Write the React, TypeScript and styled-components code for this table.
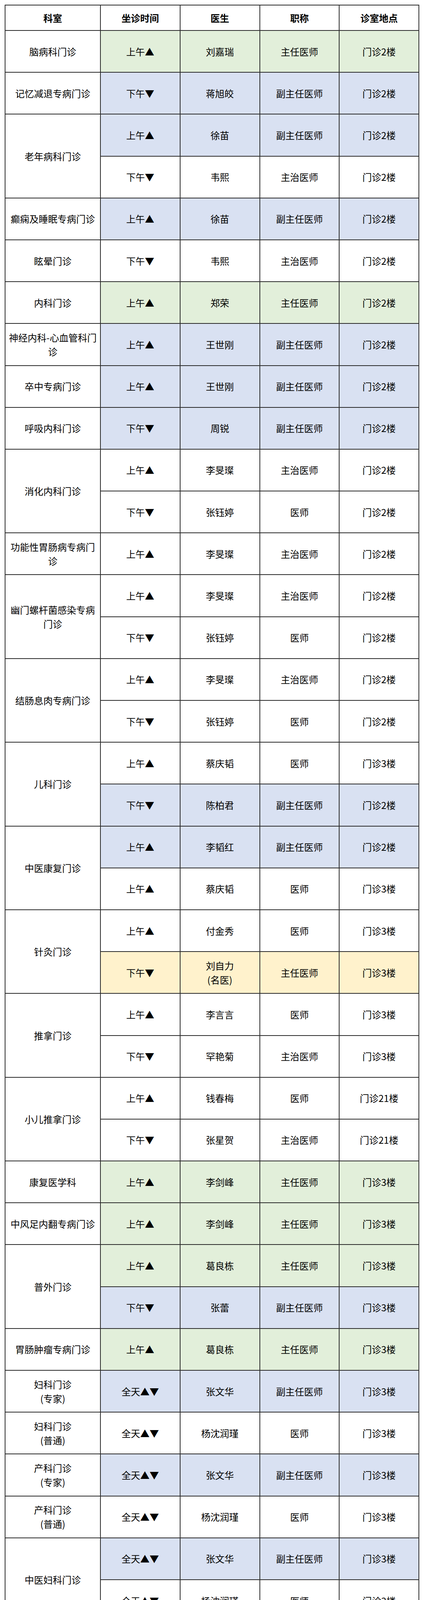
import React from 'react';
import styled, { createGlobalStyle } from 'styled-components';

type Tone = 'g' | 'b' | 'y' | 'w';

const toneColor: Record<Tone, string> = {
  g: '#e2efda',
  b: '#d9e1f2',
  y: '#fff2cc',
  w: '#ffffff',
};

interface Slot {
  time: React.ReactNode;
  doctor: string;
  title: string;
  place: string;
  tone?: Tone;
}

interface Dept {
  name: string;
  slots: Slot[];
}

const GlobalStyle = createGlobalStyle`
  html, body {
    margin: 0;
    padding: 0;
    background: #ffffff;
  }
  body {
    font-family: "Noto Sans CJK SC", "Noto Sans", sans-serif;
    color: #000;
  }
`;

const Page = styled.div`
  width: 1080px;
  padding: 12px 0 0 12px;
  box-sizing: border-box;
`;

const Table = styled.table`
  width: 1061px;
  border-collapse: collapse;
  table-layout: fixed;
`;

const DeptCol = styled.col`
  width: 244px;
`;

const HeadRow = styled.tr`
  height: 65px;
`;

const BodyRow = styled.tr`
  height: 107.2px;
`;

const HeadCell = styled.th`
  border: 2px solid #2b2b2b;
  background: #ffffff;
  font-size: 24px;
  font-weight: 700;
  line-height: 36px;
  text-align: center;
  vertical-align: middle;
  padding: 0 4px;
`;

const Cell = styled.td<{ $tone?: Tone }>`
  border: 2px solid #2b2b2b;
  background: ${(p) => toneColor[p.$tone ?? 'w']};
  font-size: 24px;
  line-height: 36px;
  text-align: center;
  vertical-align: middle;
  padding: 0 4px;
  white-space: pre-line;
  word-break: break-all;
`;

const DeptCell = styled(Cell)`
  background: #ffffff;
  padding: 0 5px;
`;

const BlankRow = styled.tr<{ $h: number }>`
  height: ${(p) => p.$h}px;
`;

const BlankCell = styled.td`
  border: 2px solid #e8e8e8;
  border-top: none;
  padding: 0;
`;

const SunSvg = styled.svg`
  width: 24px;
  height: 24px;
  vertical-align: -5px;
  margin-left: 1px;
`;

const sunRays = Array.from({ length: 32 }, (_, i) => {
  const a = (Math.PI * i) / 16;
  const r = i % 2 === 0 ? 15.4 : 11.6;
  return `${(16 + r * Math.sin(a)).toFixed(2)},${(16 - r * Math.cos(a)).toFixed(2)}`;
}).join(' ');

const SunIcon: React.FC = () => (
  <SunSvg viewBox="0 0 32 32">
    <polygon points={sunRays} fill="#f4a900" stroke="#7a4d00" strokeWidth="1" strokeLinejoin="round" />
    <circle cx="16" cy="16" r="9.6" fill="#ffd42a" stroke="#a66a00" strokeWidth="0.8" />
    <ellipse cx="12.8" cy="14.2" rx="1.3" ry="1.7" fill="#5a3600" />
    <ellipse cx="19.2" cy="14.2" rx="1.3" ry="1.7" fill="#5a3600" />
    <path d="M11.6 18.4 Q16 22.6 20.4 18.4" fill="none" stroke="#5a3600" strokeWidth="1.4" strokeLinecap="round" />
  </SunSvg>
);

const AM = '上午▲';
const PM = '下午▼';
const ALL = '全天▲▼';

const depts: Dept[] = [
  { name: '脑病科门诊', slots: [{ time: AM, doctor: '刘嘉瑞', title: '主任医师', place: '门诊2楼', tone: 'g' }] },
  { name: '记忆减退专病门诊', slots: [{ time: PM, doctor: '蒋旭皎', title: '副主任医师', place: '门诊2楼', tone: 'b' }] },
  {
    name: '老年病科门诊',
    slots: [
      { time: AM, doctor: '徐苗', title: '副主任医师', place: '门诊2楼', tone: 'b' },
      { time: PM, doctor: '韦熙', title: '主治医师', place: '门诊2楼' },
    ],
  },
  { name: '癫痫及睡眠专病门诊', slots: [{ time: AM, doctor: '徐苗', title: '副主任医师', place: '门诊2楼', tone: 'b' }] },
  { name: '眩晕门诊', slots: [{ time: PM, doctor: '韦熙', title: '主治医师', place: '门诊2楼' }] },
  { name: '内科门诊', slots: [{ time: AM, doctor: '郑荣', title: '主任医师', place: '门诊2楼', tone: 'g' }] },
  { name: '神经内科-心血管科门诊', slots: [{ time: AM, doctor: '王世刚', title: '副主任医师', place: '门诊2楼', tone: 'b' }] },
  { name: '卒中专病门诊', slots: [{ time: AM, doctor: '王世刚', title: '副主任医师', place: '门诊2楼', tone: 'b' }] },
  { name: '呼吸内科门诊', slots: [{ time: PM, doctor: '周锐', title: '副主任医师', place: '门诊2楼', tone: 'b' }] },
  {
    name: '消化内科门诊',
    slots: [
      { time: AM, doctor: '李旻璨', title: '主治医师', place: '门诊2楼' },
      { time: PM, doctor: '张钰婷', title: '医师', place: '门诊2楼' },
    ],
  },
  { name: '功能性胃肠病专病门诊', slots: [{ time: AM, doctor: '李旻璨', title: '主治医师', place: '门诊2楼' }] },
  {
    name: '幽门螺杆菌感染专病门诊',
    slots: [
      { time: AM, doctor: '李旻璨', title: '主治医师', place: '门诊2楼' },
      { time: PM, doctor: '张钰婷', title: '医师', place: '门诊2楼' },
    ],
  },
  {
    name: '结肠息肉专病门诊',
    slots: [
      { time: AM, doctor: '李旻璨', title: '主治医师', place: '门诊2楼' },
      { time: PM, doctor: '张钰婷', title: '医师', place: '门诊2楼' },
    ],
  },
  {
    name: '儿科门诊',
    slots: [
      { time: AM, doctor: '蔡庆韬', title: '医师', place: '门诊3楼' },
      { time: PM, doctor: '陈柏君', title: '副主任医师', place: '门诊2楼', tone: 'b' },
    ],
  },
  {
    name: '中医康复门诊',
    slots: [
      { time: AM, doctor: '李韬红', title: '副主任医师', place: '门诊2楼', tone: 'b' },
      { time: AM, doctor: '蔡庆韬', title: '医师', place: '门诊3楼' },
    ],
  },
  {
    name: '针灸门诊',
    slots: [
      { time: AM, doctor: '付金秀', title: '医师', place: '门诊3楼' },
      { time: PM, doctor: '刘自力\n(名医)', title: '主任医师', place: '门诊3楼', tone: 'y' },
    ],
  },
  {
    name: '推拿门诊',
    slots: [
      { time: AM, doctor: '李言言', title: '医师', place: '门诊3楼' },
      { time: PM, doctor: '罕艳菊', title: '主治医师', place: '门诊3楼' },
    ],
  },
  {
    name: '小儿推拿门诊',
    slots: [
      { time: AM, doctor: '钱春梅', title: '医师', place: '门诊21楼' },
      { time: PM, doctor: '张星贺', title: '主治医师', place: '门诊21楼' },
    ],
  },
  { name: '康复医学科', slots: [{ time: AM, doctor: '李剑峰', title: '主任医师', place: '门诊3楼', tone: 'g' }] },
  { name: '中风足内翻专病门诊', slots: [{ time: AM, doctor: '李剑峰', title: '主任医师', place: '门诊3楼', tone: 'g' }] },
  {
    name: '普外门诊',
    slots: [
      { time: AM, doctor: '葛良栋', title: '主任医师', place: '门诊3楼', tone: 'g' },
      { time: PM, doctor: '张蕾', title: '副主任医师', place: '门诊3楼', tone: 'b' },
    ],
  },
  { name: '胃肠肿瘤专病门诊', slots: [{ time: AM, doctor: '葛良栋', title: '主任医师', place: '门诊3楼', tone: 'g' }] },
  { name: '妇科门诊\n(专家)', slots: [{ time: ALL, doctor: '张文华', title: '副主任医师', place: '门诊3楼', tone: 'b' }] },
  { name: '妇科门诊\n(普通)', slots: [{ time: ALL, doctor: '杨沈润瑾', title: '医师', place: '门诊3楼' }] },
  { name: '产科门诊\n(专家)', slots: [{ time: ALL, doctor: '张文华', title: '副主任医师', place: '门诊3楼', tone: 'b' }] },
  { name: '产科门诊\n(普通)', slots: [{ time: ALL, doctor: '杨沈润瑾', title: '医师', place: '门诊3楼' }] },
  {
    name: '中医妇科门诊',
    slots: [
      { time: ALL, doctor: '张文华', title: '副主任医师', place: '门诊3楼', tone: 'b' },
      { time: ALL, doctor: '杨沈润瑾', title: '医师', place: '门诊3楼' },
    ],
  },
  { name: '产后康复专病门诊', slots: [{ time: ALL, doctor: '张文华', title: '副主任医师', place: '门诊3楼', tone: 'b' }] },
  { name: '更年期门诊', slots: [{ time: ALL, doctor: '张文华', title: '副主任医师', place: '门诊3楼', tone: 'b' }] },
  { name: '眼科', slots: [{ time: ALL, doctor: '杨静晖', title: '医师', place: '门诊3楼' }] },
  {
    name: '皮肤科',
    slots: [
      { time: ALL, doctor: '杨榆婷', title: '主治医师', place: '门诊3楼' },
      {
        time: (
          <>
            上午▲午间
            <SunIcon />
          </>
        ),
        doctor: '凡福青',
        title: '医师',
        place: '门诊3楼',
      },
    ],
  },
  { name: '口腔科门诊', slots: [{ time: ALL, doctor: '斯那永次', title: '医师', place: '门诊4楼' }] },
  { name: '骨伤科·疼痛科', slots: [{ time: AM, doctor: '崔菁', title: '主治医师', place: '门诊3楼' }] },
  { name: '骨伤科·疼痛科', slots: [{ time: PM, doctor: '陈晓林', title: '副主任医师', place: '门诊3楼', tone: 'b' }] },
  { name: '减重门诊', slots: [{ time: PM, doctor: '陈鸿', title: '主治医师', place: '门诊5楼' }] },
];

const headers = ['科室', '坐诊时间', '医生', '职称', '诊室地点'];

// empty spreadsheet rows left under the schedule
const blankHeights = [24, 54, 114, 77, 58, 41];

const Columns: React.FC = () => (
  <colgroup>
    <DeptCol />
    <col />
    <col />
    <col />
    <col />
  </colgroup>
);

const App: React.FC = () => {
  return (
    <>
      <GlobalStyle />
      <Page>
        <Table>
          <Columns />
          <thead>
            <HeadRow>
              {headers.map((h) => (
                <HeadCell key={h}>{h}</HeadCell>
              ))}
            </HeadRow>
          </thead>
          <tbody>
            {depts.map((d, di) =>
              d.slots.map((s, si) => (
                <BodyRow key={`${di}-${si}`}>
                  {si === 0 && <DeptCell rowSpan={d.slots.length}>{d.name}</DeptCell>}
                  <Cell $tone={s.tone}>{s.time}</Cell>
                  <Cell $tone={s.tone}>{s.doctor}</Cell>
                  <Cell $tone={s.tone}>{s.title}</Cell>
                  <Cell $tone={s.tone}>{s.place}</Cell>
                </BodyRow>
              ))
            )}
          </tbody>
        </Table>
        <Table>
          <Columns />
          <tbody>
            {blankHeights.map((h, i) => (
              <BlankRow key={i} $h={h}>
                {headers.map((c) => (
                  <BlankCell key={c} />
                ))}
              </BlankRow>
            ))}
          </tbody>
        </Table>
      </Page>
    </>
  );
};

export default App;
